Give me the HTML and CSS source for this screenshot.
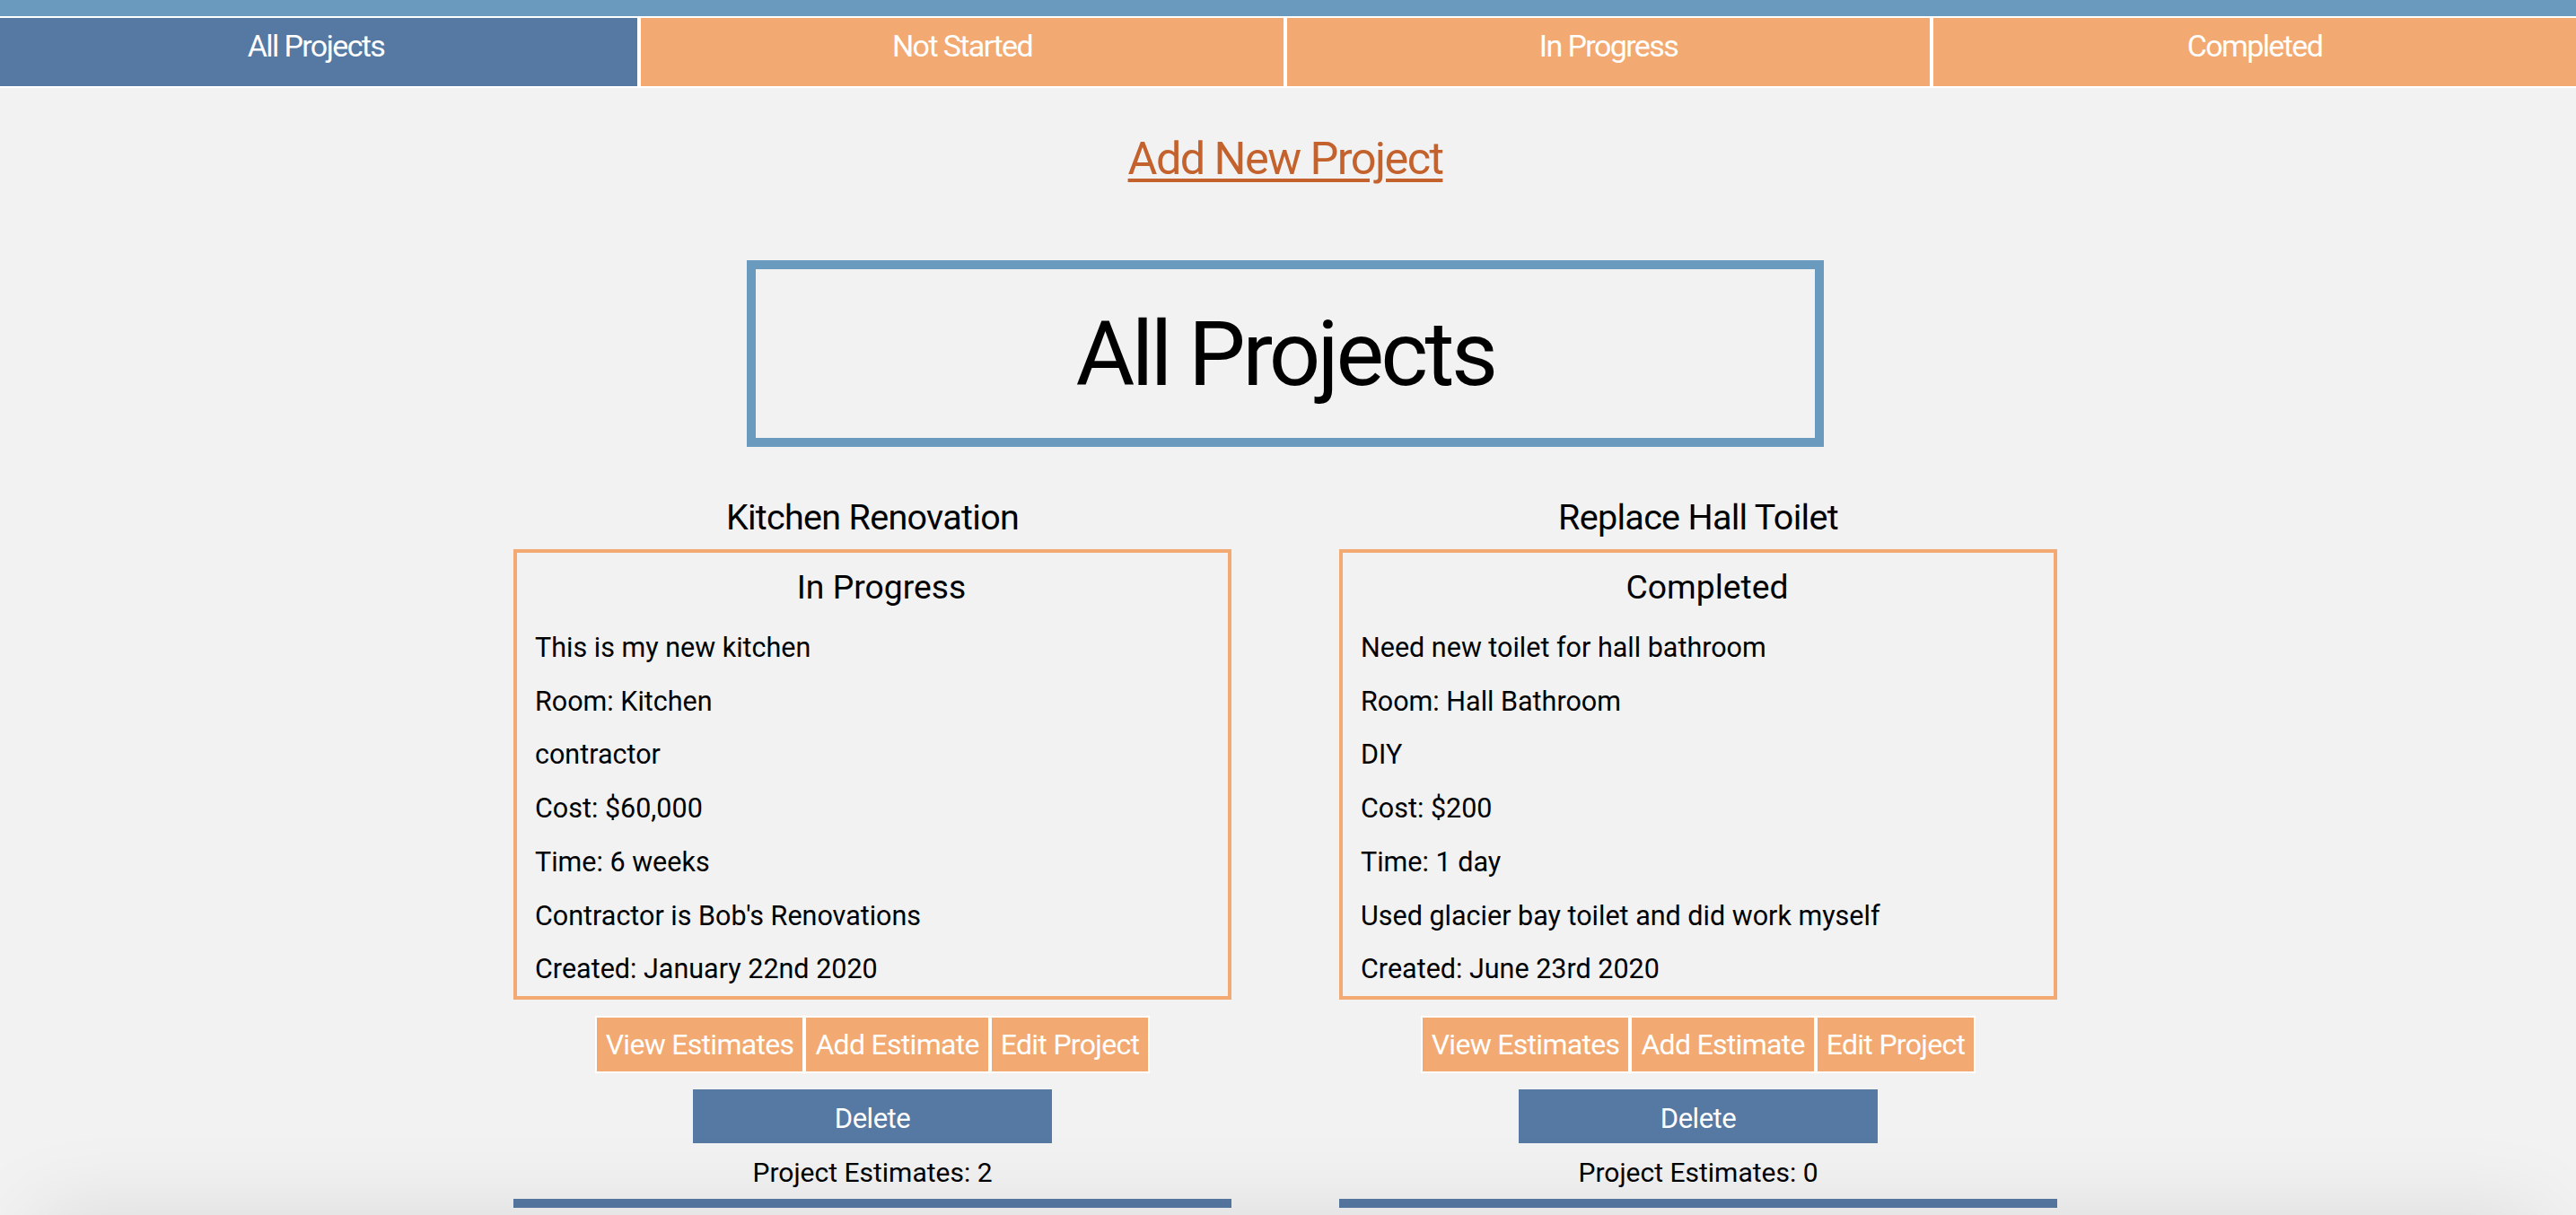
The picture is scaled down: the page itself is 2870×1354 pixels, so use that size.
FILE: index.html
```html
<!DOCTYPE html>
<html lang="en">
<head>
<meta charset="utf-8">
<title>Projects</title>
<link rel="stylesheet" href="styles.css">
</head>
<body>
<div class="page">
  <header class="header">
    <div class="topbar"></div>
    <nav class="tabs">
      <a class="tab tab-active" href="#">All Projects</a>
      <a class="tab" href="#">Not Started</a>
      <a class="tab" href="#">In Progress</a>
      <a class="tab" href="#">Completed</a>
    </nav>
  </header>

  <main class="main">
    <div class="add-row"><a class="add-link" href="#">Add New Project</a></div>

    <div class="title-box"><h1 class="title">All Projects</h1></div>

    <div class="projects">
      <section class="project">
        <h2 class="project-name">Kitchen Renovation</h2>
        <div class="card">
          <h3 class="status">In Progress</h3>
          <p class="line">This is my new kitchen</p>
          <p class="line">Room: Kitchen</p>
          <p class="line">contractor</p>
          <p class="line">Cost: $60,000</p>
          <p class="line">Time: 6 weeks</p>
          <p class="line">Contractor is Bob's Renovations</p>
          <p class="line">Created: January 22nd 2020</p>
        </div>
        <div class="actions">
          <button class="btn">View Estimates</button><button class="btn">Add Estimate</button><button class="btn">Edit Project</button>
        </div>
        <button class="delete">Delete</button>
        <p class="estimates">Project Estimates: 2</p>
        <div class="divider"></div>
      </section>

      <section class="project">
        <h2 class="project-name">Replace Hall Toilet</h2>
        <div class="card">
          <h3 class="status">Completed</h3>
          <p class="line">Need new toilet for hall bathroom</p>
          <p class="line">Room: Hall Bathroom</p>
          <p class="line">DIY</p>
          <p class="line">Cost: $200</p>
          <p class="line">Time: 1 day</p>
          <p class="line">Used glacier bay toilet and did work myself</p>
          <p class="line">Created: June 23rd 2020</p>
        </div>
        <div class="actions">
          <button class="btn">View Estimates</button><button class="btn">Add Estimate</button><button class="btn">Edit Project</button>
        </div>
        <button class="delete">Delete</button>
        <p class="estimates">Project Estimates: 0</p>
        <div class="divider"></div>
      </section>
    </div>
  </main>
</div>
<div class="bottom-shade"></div>
</body>
</html>
```

FILE: styles.css
```css
* { box-sizing: border-box; }

html, body {
  margin: 0;
  padding: 0;
  background: #f2f2f2;
  overflow: hidden;
}

body {
  font-family: "Roboto", "Liberation Sans", sans-serif;
  color: #000;
}

.page {
  margin-left: -6px;
  width: calc(100% + 6px);
}

.topbar {
  height: 18px;
  background: #6a9abd;
}

.tabs {
  display: flex;
  gap: 4px;
  background: #fff;
  border-top: 2px solid #fff;
  border-bottom: 2px solid #fff;
}

.tab {
  flex: 1;
  height: 76px;
  padding-bottom: 14px;
  line-height: 62px;
  text-align: center;
  font-size: 34px;
  letter-spacing: -1.6px;
  color: #fff;
  text-decoration: none;
  background: #f3aa72;
}

.tab-active {
  background: #5679a3;
}

.main {
  display: flex;
  flex-direction: column;
  align-items: center;
}

.add-row {
  margin-top: 49px;
  height: 60px;
  line-height: 60px;
}

.add-link {
  font-size: 50.5px;
  letter-spacing: -1.6px;
  color: #c4622d;
  text-decoration: underline;
  text-decoration-thickness: 4px;
  text-underline-offset: 5px;
}

.title-box {
  margin-top: 83px;
  width: 1200px;
  height: 208px;
  border: 10px solid #6a9abd;
  padding-top: 2px;
  text-align: center;
}

.title {
  margin: 0;
  font-weight: 400;
  font-size: 101px;
  line-height: 186px;
  letter-spacing: -3.6px;
}

.projects {
  display: flex;
  justify-content: center;
  gap: 120px;
}

.project {
  width: 800px;
  display: flex;
  flex-direction: column;
  align-items: center;
}

.project-name {
  margin: 54px 0 10px;
  height: 50px;
  font-weight: 400;
  font-size: 39.5px;
  line-height: 50px;
  letter-spacing: -0.7px;
  text-align: center;
}

.card {
  width: 800px;
  border: 4px solid #f3aa72;
  padding: 0 0 0 20px;
}

.status {
  margin: 13px 0 13px;
  height: 50px;
  font-weight: 400;
  font-size: 37.3px;
  line-height: 50px;
  text-align: center;
}

.line {
  margin: 0;
  font-size: 30.5px;
  line-height: 59.7px;
}

.actions {
  display: flex;
  justify-content: center;
  margin-top: 18px;
}

.btn {
  height: 64px;
  border: 2px solid #fff;
  padding: 0 10px;
  background: #f3aa72;
  color: #fff;
  font-family: inherit;
  font-size: 32px;
  letter-spacing: -0.7px;
  line-height: 60px;
  cursor: pointer;
}

.delete {
  margin-top: 18px;
  width: 400px;
  height: 60px;
  border: 0;
  padding: 5px 0 0;
  background: #5679a3;
  color: #fff;
  font-family: inherit;
  font-size: 31px;
  letter-spacing: -0.5px;
  line-height: 55px;
  cursor: pointer;
}

.estimates {
  margin: 13px 0 0;
  height: 40px;
  font-size: 30px;
  line-height: 40px;
}

.divider {
  margin-top: 9px;
  width: 800px;
  height: 10px;
  background: #5679a3;
}

.bottom-shade {
  position: fixed;
  left: 40px;
  right: 40px;
  bottom: -120px;
  height: 120px;
  box-shadow: 0 0 100px rgba(0, 0, 0, 0.1);
}
```
